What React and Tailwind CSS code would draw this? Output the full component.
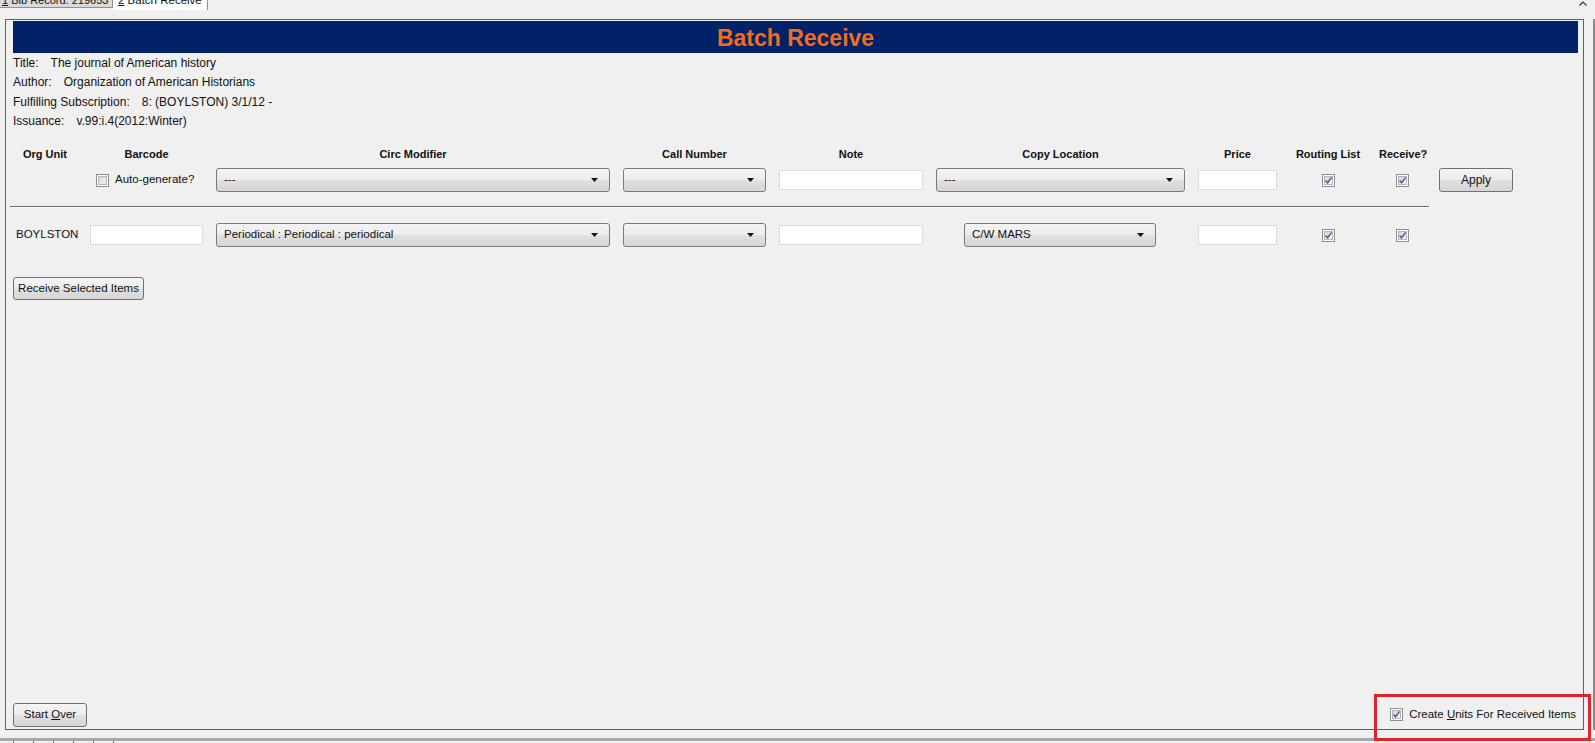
import React from 'react'

const BTN_BG = 'bg-[linear-gradient(#f4f4f4_0%,#ececec_50%,#e0e0e0_51%,#d6d6d6_100%)]'

const Caret = () => (
  <svg width="7" height="4" viewBox="0 0 7 4" className="shrink-0">
    <path d="M0 0h7L3.5 4z" fill="#111" />
  </svg>
)

function Check({ checked = false, id }) {
  return (
    <svg width="13" height="13" viewBox="0 0 13 13" className="shrink-0">
      <defs>
        <linearGradient id={id} x1="0" y1="0" x2="1" y2="1">
          <stop offset="0" stopColor="#cfd3d8" />
          <stop offset="1" stopColor="#f7f7f7" />
        </linearGradient>
      </defs>
      <rect x="0.5" y="0.5" width="12" height="12" fill="#fdfdfd" stroke="#8e8f8f" />
      <rect x="2.5" y="2.5" width="8" height="8" fill={`url(#${id})`} stroke="#b4b8bd" />
      {checked && (
        <path d="M3.6 6.4 L5.6 8.8 L9.6 3.4" stroke="#4b5f99" strokeWidth="1.5" fill="none" />
      )}
    </svg>
  )
}

function Select({ value = '', className = '' }) {
  return (
    <div className={`h-[24px] flex items-center justify-between rounded-[3px] border border-[#7a7a7a] ${BTN_BG} pl-[7px] pr-[11px] ${className}`}>
      <span className="truncate">{value}</span>
      <Caret />
    </div>
  )
}

function Input({ className = '' }) {
  return <div className={`h-[20px] bg-white border border-[#dcdcdc] ${className}`} />
}

function Button({ children, className = '' }) {
  return (
    <div className={`flex items-center justify-center rounded-[3px] border border-[#707070] ${BTN_BG} ${className}`}>
      {children}
    </div>
  )
}

const GRID = 'grid grid-cols-[64px_113px_394px_143px_144px_249px_79px_76px_47px_74px] gap-x-[13px] ml-[7px]'

const HEADERS = ['Org Unit', 'Barcode', 'Circ Modifier', 'Call Number', 'Note', 'Copy Location', 'Price', 'Routing List', 'Receive?', '']

const INFO = [
  ['Title:', 'The journal of American history'],
  ['Author:', 'Organization of American Historians'],
  ['Fulfilling Subscription:', '8: (BOYLSTON) 3/1/12 -'],
  ['Issuance:', 'v.99:i.4(2012:Winter)'],
]

export default function App() {
  return (
    <div className="w-[1595px] h-[743px] bg-[#f0f0f0] overflow-hidden flex flex-col text-[11.5px] text-[#111] font-[Liberation_Sans,Arial,sans-serif] relative">
      {/* tab strip */}
      <div className="h-[19px] flex items-start shrink-0">
        <div className="w-[113px] h-[8px] overflow-hidden bg-[#dadada] border-r border-b border-[#8e9196] pl-[2px]">
          <div className="mt-[-7px] leading-[14px] text-[11px] whitespace-nowrap">
            <span className="underline">1</span> Bib Record: 219653
          </div>
        </div>
        <div className="w-[95px] h-[10px] overflow-hidden bg-white border-r border-[#8e9196] pl-[5px]">
          <div className="mt-[-7px] leading-[14px] text-[11.5px] whitespace-nowrap">
            <span className="underline">2</span> Batch Receive
          </div>
        </div>
        <svg width="8" height="5" viewBox="0 0 8 5" className="ml-auto mr-[8px] mt-[1px]">
          <path d="M0.5 4.5 L4 1 L7.5 4.5" stroke="#333" strokeWidth="1.2" fill="none" />
        </svg>
      </div>

      {/* main frame */}
      <div className="flex h-[711px] shrink-0">
        <div className="ml-[5px] w-[1579px] h-full border border-[#5f5f5f] flex flex-col">
          <div className="mt-[1px] ml-[7px] mr-[5px] h-[32px] bg-[#012266] flex items-center justify-center pt-[2px]">
            <span className="text-[23px] font-bold text-[#f26b21] leading-none">Batch Receive</span>
          </div>

          <div className="ml-[7px] text-[12px]">
            {INFO.map(([k, v]) => (
              <div key={k} className="h-[19.5px] flex items-center whitespace-nowrap">
                <span>{k}</span>
                <span className="ml-[12px]">{v}</span>
              </div>
            ))}
          </div>

          {/* column headers */}
          <div className={`${GRID} mt-[15px] h-[16px] items-center font-bold text-[11px]`}>
            {HEADERS.map((h, i) => (
              <div key={i} className="text-center whitespace-nowrap">{h}</div>
            ))}
          </div>

          {/* template row */}
          <div className={`${GRID} mt-[6px] h-[24px] items-center`}>
            <div />
            <div className="flex items-center pl-[6px]">
              <Check id="c-auto" />
              <span className="ml-[6px] whitespace-nowrap">Auto-generate?</span>
            </div>
            <Select value="---" />
            <Select />
            <Input />
            <Select value="---" />
            <Input />
            <div className="flex justify-center"><Check id="c-r1" checked /></div>
            <div className="flex justify-center"><Check id="c-v1" checked /></div>
            <Button className="h-[24px] text-[12px]">Apply</Button>
          </div>

          {/* separator */}
          <div className="mt-[14px] ml-[4px] w-[1419px] h-px bg-[#6a6a6a]" />
          <div className="ml-[4px] w-[1419px] h-px bg-[#fbfbfb]" />

          {/* item row */}
          <div className={`${GRID} mt-[15px] h-[24px] items-center`}>
            <div className="pl-[3px]">BOYLSTON</div>
            <Input className="h-[19px]" />
            <Select value="Periodical : Periodical : periodical" />
            <Select />
            <Input />
            <div className="pl-[28px]">
              <Select value="C/W MARS" className="w-[192px]" />
            </div>
            <Input />
            <div className="flex justify-center"><Check id="c-r2" checked /></div>
            <div className="flex justify-center"><Check id="c-v2" checked /></div>
            <div />
          </div>

          <div className="ml-[7px] mt-[30px]">
            <Button className="w-[131px] h-[23px]">Receive Selected Items</Button>
          </div>

          <div className="flex-1" />

          <div className="flex items-end justify-between ml-[7px] mr-[7px] mb-[2px]">
            <Button className="w-[74px] h-[24px]">
              <span>Start <span className="underline">O</span>ver</span>
            </Button>
            <div className="flex items-center mb-[4px]">
              <Check id="c-units" checked />
              <span className="ml-[6px] whitespace-nowrap">
                Create <span className="underline">U</span>nits For Received Items
              </span>
            </div>
          </div>
        </div>
        <div className="ml-[9px] w-[2px] h-full bg-[#8a8a8a]" />
      </div>

      {/* status bar */}
      <div className="h-[8px] shrink-0" />
      <div className="h-[3px] bg-[#a7a7a7] shrink-0" />
      <div className="h-[2px] flex gap-[19px] pl-[13px] shrink-0">
        {[0, 1, 2, 3, 4, 5].map(i => (
          <div key={i} className="w-px h-[2px] bg-[#777]" />
        ))}
      </div>

      {/* annotation box */}
      <div className="absolute left-[1374px] top-[694px] w-[217px] h-[47px] border-[3px] border-[#e1232c]" />
    </div>
  )
}
